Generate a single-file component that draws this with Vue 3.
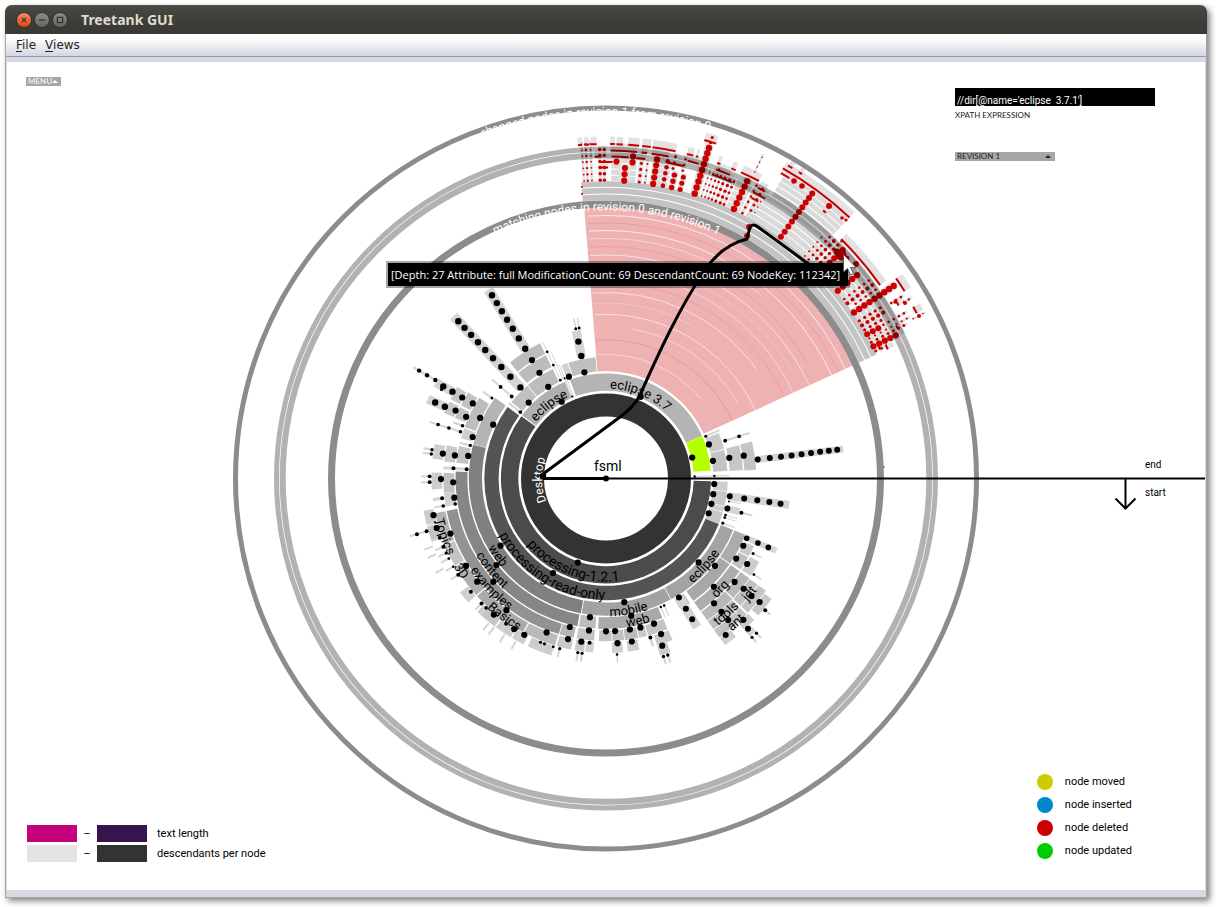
<script setup>
import { ref } from 'vue'

const CX = 606
const CY = 478.5
const UNIT = 62

const xpath = ref("//dir[@name='eclipse  3.7.1']")
const revision = ref('REVISION 1')

const level = (n) => UNIT * Math.sqrt(n)
const polar = (r, deg) => {
  const t = (deg * Math.PI) / 180
  return [(CX + r * Math.cos(t)).toFixed(2), (CY + r * Math.sin(t)).toFixed(2)]
}
const ringSector = (r0, r1, a0, a1) => {
  const large = a1 - a0 > 180 ? 1 : 0
  const [x0, y0] = polar(r0, a0)
  const [x1, y1] = polar(r1, a0)
  const [x2, y2] = polar(r1, a1)
  const [x3, y3] = polar(r0, a1)
  return `M${x0} ${y0}L${x1} ${y1}A${r1} ${r1} 0 ${large} 1 ${x2} ${y2}L${x3} ${y3}A${r0} ${r0} 0 ${large} 0 ${x0} ${y0}Z`
}
const arc = (r, a0, a1) => {
  const sweep = a1 > a0 ? 1 : 0
  const large = Math.abs(a1 - a0) > 180 ? 1 : 0
  const [x0, y0] = polar(r, a0)
  const [x1, y1] = polar(r, a1)
  return `M${x0} ${y0}A${r} ${r} 0 ${large} ${sweep} ${x1} ${y1}`
}
const gap = (n) => (n < 4 ? 2.3 : n < 7 ? 1.4 : 0.8)

// [level, start angle, end angle, fill]
const cells = [
  [2, 1.5, 216.4, '#4b4b4b'], [2, 217, 247, '#b0b0b0'], [2, 250, 336, '#b4b4b4'], [2, 336.2, 355.6, '#b4ff00'],
  [3, 22, 216, '#545454'], [3, 1.5, 6, '#cfcfcf'], [3, 6.3, 13, '#c8c8c8'], [3, 13.3, 16, '#cfcfcf'], [3, 16.2, 22, '#c8c8c8'],
  [3, 219, 229.6, '#c0c0c0'], [3, 230, 244, '#bcbcbc'], [4, 230.3, 244, '#bcbcbc'], [5, 230.4, 244, '#bcbcbc'],
  [3, 248.6, 251.6, '#d2d2d2'], [3, 252, 265, '#c0c0c0'],
  [3, 338, 346, '#cacaca'], [3, 346.4, 356.4, '#c4c4c4'], [4, 346, 356.5, '#c6c6c6'], [5, 345.8, 356.7, '#c4c4c4'],
  [4, 194.4, 216, '#b4b4b4'], [4, 100.6, 194.2, '#808080'], [4, 61.9, 100.2, '#a2a2a2'], [4, 22, 61.6, '#a3a3a3'],
  [5, 200, 212.5, '#bdbdbd'], [5, 195.5, 199.5, '#cecece'], [5, 186, 192.5, '#c4c4c4'],
  [5, 101, 182.7, '#868686'], [5, 94, 100.4, '#bdbdbd'], [5, 68, 93, '#a9a9a9'], [5, 56, 60.5, '#c8c8c8'],
  [5, 34.8, 54.5, '#a8a8a8'], [5, 22, 34.4, '#acacac'],
  [6, 206.8, 212, '#c2c2c2'], [6, 201.8, 206, '#c2c2c2'], [6, 186, 191.8, '#cacaca'], [6, 175, 182, '#c2c2c2'], [6, 170.8, 175, '#d0d0d0'],
  [6, 106.9, 168.5, '#929292'], [6, 101.5, 106.6, '#b6b6b6'], [6, 94.2, 100.4, '#c4c4c4'], [6, 88, 92.5, '#c4c4c4'],
  [6, 83.6, 87.7, '#c0c0c0'], [6, 78.6, 83.3, '#bbbbbb'], [6, 75.4, 78.3, '#c8c8c8'], [6, 67.8, 75, '#c4c4c4'],
  [6, 34.8, 54.5, '#adadad'], [6, 29, 34, '#c0c0c0'], [6, 24.6, 28.6, '#c8c8c8'],
  [7, 207, 211.6, '#c6c6c6'], [7, 202, 206.2, '#c8c8c8'], [7, 186.5, 191.4, '#cfcfcf'], [7, 176.4, 182, '#cdcdcd'],
  [7, 158, 168.5, '#b4b4b4'], [7, 150, 157.6, '#c4c4c4'], [7, 138, 149.6, '#b0b0b0'], [7, 118.4, 137.6, '#aaaaaa'],
  [7, 107, 118, '#bababa'], [7, 101.6, 106.4, '#c8c8c8'], [7, 97.2, 100.4, '#c8c8c8'], [7, 94.2, 96.8, '#d0d0d0'],
  [7, 84.4, 88, '#d0d0d0'], [7, 79, 82.8, '#cfcfcf'], [7, 67.6, 73, '#cacaca'],
  [7, 43.6, 54.5, '#b8b8b8'], [7, 34.8, 43.2, '#b8b8b8'], [7, 28.6, 34, '#cccccc'],
  [8, 165.5, 170, '#cccccc'], [8, 160, 165, '#c4c4c4'], [8, 138, 142, '#cfcfcf'], [8, 127, 134, '#c6c6c6'],
  [8, 121, 126.5, '#cccccc'], [8, 116.4, 120.5, '#cfcfcf'], [8, 107.4, 115, '#cccccc'], [8, 69.6, 73, '#cccccc'],
  [8, 44, 54.5, '#bebebe'], [8, 35, 43.4, '#c0c0c0'], [9, 44, 54.5, '#c2c2c2'], [9, 35, 43.4, '#c4c4c4'],
  [10, 50.6, 54.4, '#cccccc'], [10, 43.6, 47.6, '#cccccc'], [10, 36, 42, '#c8c8c8'],
]

// [angle, first level, last level, band width, dot radius]
const spokes = [
  [238.1, 6, 12, 10, 3.2], [226.8, 4, 12, 10, 3.2], [221, 4, 5, 2, 1.9], [217.8, 3, 3, 2, 1.9],
  [245.1, 3, 5, 1, 1.4], [246.6, 3, 4, 1, 0], [247.6, 2, 3, 1, 1.1], [248.6, 2, 2, 1, 0],
  [258.6, 4, 5, 9, 3.2], [258.6, 6, 6, 1.5, 1.5], [259.9, 6, 6, 1.5, 1.5],
  [209.5, 8, 9, 9, 3.2], [210, 10, 12, 2.5, 2.2], [204, 8, 9, 9, 3.2], [197.8, 6, 8, 2, 1.8], [200.2, 6, 6, 2, 1.8],
  [215.2, 5, 5, 2, 1.5], [193.7, 5, 5, 2, 1.6], [208.4, 9, 9, 2, 1.6], [189.4, 8, 8, 2, 1.7], [188, 8, 8, 2, 1.7],
  [183.8, 5, 6, 3, 2], [180.7, 8, 8, 2, 1.9], [178.8, 8, 8, 2, 1.9], [173.1, 7, 7, 3, 2], [170.4, 6, 7, 2, 1.8],
  [8.2, 4, 8, 8, 3], [10.6, 4, 4, 1, 1], [13.9, 4, 4, 7, 3], [14.2, 5, 5, 2, 2], [17, 4, 4, 1, 1.4], [18.2, 4, 4, 1, 1.4], [20.9, 4, 4, 1.5, 1.6],
  [-7.1, 6, 14, 7, 3], [-17.6, 4, 5, 2, 1.9], [-23, 3, 3, 2, 1.5], [-1.3, 2, 3, 1.2, 1.2],
  [58.5, 5, 7, 9, 3], [66.9, 5, 5, 1.2, 1.3], [65.4, 5, 5, 1.2, 1.3], [99.2, 8, 8, 2, 1.6], [97.8, 8, 8, 2, 1.6],
  [95.7, 7, 7, 2, 2], [86.4, 8, 8, 1.5, 1.3], [74.4, 7, 7, 2.5, 2], [72.1, 9, 9, 2, 1.7], [70.7, 9, 9, 2, 1.7],
  [23, 6, 8, 6, 2.8], [27, 7, 7, 1.5, 1.5], [33, 8, 8, 1.5, 1.4], [39.6, 11, 11, 2, 2],
  [46.6, 11, 11, 8, 3], [47.4, 12, 12, 2, 1.6], [45.8, 12, 12, 2, 1.6], [52.6, 10, 10, 8, 3],
]

const nodes = [
  [2, 108.6], [2, -13.7], [2, 240], [2, -67], [3, 119.3], [4, 147.5], [5, 141.7], [6, 137.5], [4, 205.5], [3, 224.5],
  [3, 237.8], [4, 237.8], [5, 238], [3, 250], [3, 258.5], [3, -18.3], [3, -9.4], [4, -9.5], [5, -9.4],
  [3, 2.9], [3, 8.3], [3, 13.5], [3, 18.7], [5, 205.7], [5, 197.3], [6, 209.4], [7, 209.4], [6, 203.8], [7, 204.3],
  [5, 189.3], [6, 188.7], [7, 188.7], [6, 178.6], [7, 179.8], [6, 172.8], [8, 168], [7, 160.5], [8, 163.7],
  [7, 148], [7, 141.3], [7, 127.1], [7, 111.1], [6, 103.7], [7, 103.3], [4, 81.6], [5, 79.6], [5, 96.6], [6, 96.4],
  [6, 90], [6, 86.6], [6, 81], [6, 77], [6, 71.7], [7, 98.6], [7, 86], [7, 81], [7, 70.5], [8, 71.4],
  [4, 42.2], [5, 38.7], [6, 45.1], [7, 49.1], [8, 49.1], [9, 49.2], [7, 38.8], [8, 38.7], [9, 38.9], [10, 38.8],
  [10, 45.8], [6, 26.1], [6, 31.6], [7, 31.2], [8, 129.5], [8, 121.4], [8, 117.6],
]

// [angle, level, dot radius] thin leaves round the lower left edge
const leaves = [
  [165.6, 8, 1.2], [160.4, 8, 2], [157.2, 8, 2], [155, 8, 1.6], [153, 8, 1.4], [150, 8, 1.3], [146.9, 8, 2], [140, 8, 2],
  [134.9, 8, 2], [132.8, 8, 1.8], [124.5, 8, 2], [111.8, 8, 1.6], [110.4, 8, 1.6], [107.4, 8, 1.4], [105.2, 8, 1.6],
  [163.6, 9, 2], [163.6, 10, 2], [129, 9, 0], [127, 9, 0], [119, 9, 0], [46, 9, 0], [158.6, 9, 0], [156, 9, 0], [151, 9, 0], [123, 9, 0],
]

// deleted subtrees: [angle, first level, last level, dot radius, band width]
const deleted = [
  [-94.2, 23, 29, 0.9, 3], [-93.5, 23, 29, 1.2, 3], [-92.7, 23, 29, 0.9, 3], [-91.1, 23, 28, 1.7, 4], [-90.3, 23, 28, 1.7, 4],
  [-88.1, 26, 26, 3.1, 9], [-86.5, 23, 25, 3.1, 12], [-85.2, 26, 27, 3.1, 9], [-83.6, 23, 26, 1.6, 5], [-82.5, 23, 26, 1, 3],
  [-80.9, 23, 27, 3.1, 8], [-79, 23, 27, 2.3, 6], [-77.3, 23, 25, 2.7, 7], [-75.6, 23, 25, 2.5, 6], [-77.8, 26, 28, 1.5, 4], [-76, 26, 28, 1.3, 4],
  [-72.7, 23, 31, 3.2, 9], [-72.7, 32, 33, 1.6, 6], [-71.3, 23, 27, 0.9, 2], [-70.6, 23, 27, 1, 2], [-69.9, 23, 28, 1.2, 2], [-69.2, 23, 27, 1.3, 2],
  [-68.4, 23, 27, 1.6, 3], [-67.5, 23, 27, 1.7, 3], [-66.7, 23, 27, 1.4, 3],
  [-64.6, 23, 28, 3.2, 9], [-62.8, 23, 28, 1.3, 4], [-61.6, 24, 28, 1.5, 4], [-64.1, 30, 33, 0.8, 2],
  [-54.1, 23, 32, 3, 8], [-48.2, 23, 27, 1, 2], [-47.2, 23, 28, 1.4, 3], [-46.2, 24, 28, 1.9, 3], [-45.2, 23, 29, 1.7, 3],
  [-44, 25, 28, 3, 8], [-39, 23, 27, 3.1, 8], [-41.8, 24, 27, 2, 5], [-37, 23, 28, 1.3, 3], [-36, 23, 28, 2, 4], [-35, 24, 28, 1.3, 3],
  [-33.8, 23, 31, 3.2, 8], [-31.9, 23, 27, 1.6, 3], [-30.9, 23, 27, 2.1, 4], [-29.9, 23, 26, 1.6, 3], [-28.9, 23, 25, 3, 8],
  [-29, 26, 30, 1.3, 3], [-28, 23, 30, 1.1, 3], [-27.2, 23, 29, 1.5, 3], [-26.3, 23, 27, 3.1, 7], [-25.3, 23, 24, 1.5, 3],
  [-31.6, 29, 31, 1.4, 3], [-30.6, 31, 32, 1.2, 3], [-27.5, 31, 33, 0.8, 2], [-60.8, 24, 26, 0.8, 2],
]

// wide pale blocks behind the deleted nodes: [level, start, end]
const pale = []
for (let n = 23; n <= 32; n++) pale.push([n, n < 28 ? -62 : -59.6, n < 28 ? -46 : -47])
for (let n = 23; n <= 28; n++) pale.push([n, -45, -35.4], [n, -34.6, -26])
for (let n = 23; n <= 27; n++) pale.push([n, -89, -84.4], [n, -81.6, -78.2], [n, -66.2, -63.4], [n, -73.6, -71.8])

// [radius, start, end]
const strips = [
  [334.5, -94.8, -94.1], [334.5, -93.7, -92.9], [334.5, -92.6, -91.6], [334.5, -89.3, -88.5], [334.5, -88.2, -87.1],
  [334.5, -86.2, -84.3], [334.5, -83.8, -82.3], [334.5, -82, -78], [334.5, -76, -74.9], [334.5, -74.4, -74], [334.5, -70.6, -70],
  [334.5, -68, -67.2], [334.5, -66.2, -62.8], [357, -60.3, -47], [362, -59.8, -59], [362, -57.8, -57.2], [352.5, -73.8, -71.8],
  [335.5, -45.5, -35.2], [352.5, -34.6, -32.1], [352, -29.2, -28], [340, -31.8, -30.6], [345, -51, -50.4],
  [322, -92, -90.8], [316.5, -91, -88.8], [311, -91, -89.6], [328, -89.2, -84.6], [328, -83.8, -82.8], [322, -89, -86], [322, -84.6, -83],
  [328, -82, -79], [322, -79, -76], [328, -75.6, -73.6], [328, -70.4, -67.8], [322, -70.8, -67], [328, -62.4, -61], [322, -62.8, -60.4],
  [316, -62.6, -61.2], [303, -26, -25.2], [310, -25.6, -24.6], [352, -60.2, -58.6], [328, -27.8, -27],
]
const loneDots = [
  [829, 206, 3], [794, 181, 2.8], [802, 186, 2.8], [842, 218, 1.8], [846, 220, 1.6], [895, 302, 1.8], [905, 303, 2],
  [919, 316, 2], [841, 255, 5.5], [837, 252, 3.4], [846, 259, 3.4], [856, 264, 3], [582, 187, 1], [582, 194, 1], [749, 227, 3], [747, 236, 3], [884, 467, 0.8],
]

const pinkLines = [
  [4, '#f6d5d5', -94, -40], [5, '#e89a9a', -94, -24.6], [6, '#f6d5d5', -80, -30], [7, '#f9e0e0', -94, -24.6], [8, '#f3c6c6', -94, -60],
  [9, '#f9e0e0', -94, -36], [10, '#ea9f9f', -90, -24.6], [11, '#f6d5d5', -94, -24.6], [12, '#f2c4c4', -80, -30], [13, '#f9e0e0', -94, -24.6],
  [14, '#ea9f9f', -94, -30], [15, '#f6d5d5', -94, -50], [16, '#fbeaea', -94, -24.6], [17, '#ea9f9f', -94, -24.6], [18, '#fbeaea', -94, -24.6],
]

// [text, baseline radius, start angle, direction, classes]
const labels = [
  ['changed nodes in revision 1 from revision 0', 363, 250, 1, 'light'],
  ['matching nodes in revision 0 and revision 1', 268, 245.5, 1, 'light'],
  ['Desktop', 64, 159, 1, 'light'],
  ['eclipse 3.7', 90, 272.5, 1, ''],
  ['eclipse', 90, 219, 1, ''],
  ['processing-1.2.1', 103, 140, -1, 'large'],
  ['processing-read-only', 121, 152, -1, 'large'],
  ['web', 137, 149.5, -1, ''],
  ['content', 151, 149.5, -1, ''],
  ['examples', 164, 146, -1, ''],
  ['Basics', 176, 132.6, -1, ''],
  ['Topics', 176, 166.5, -1, ''],
  ['3D', 176, 150, -1, ''],
  ['mobile', 138, 88.4, -1, ''],
  ['web', 150, 82, -1, ''],
  ['eclipse', 136, 50.5, -1, ''],
  ['org', 163, 47.4, -1, ''],
  ['tools', 185, 52.8, -1, ''],
  ['ant', 198, 50.6, -1, ''],
  ['jdt', 188, 41, -1, ''],
]

const range = (a, b) => Array.from({ length: b - a + 1 }, (_, i) => a + i)
const bandEnds = (angle, from, to) => {
  const [x1, y1] = polar(level(from), angle)
  const [x2, y2] = polar(level(to + 1) - 1, angle)
  return { x1, y1, x2, y2 }
}
const at = (n, angle) => {
  const [cx, cy] = polar(level(n) + 1, angle)
  return { cx, cy }
}

const changes = [
  { name: 'moved', text: 'node moved' },
  { name: 'inserted', text: 'node inserted' },
  { name: 'deleted', text: 'node deleted' },
  { name: 'updated', text: 'node updated' },
]
</script>

<template>
  <div class="window">
    <header class="titlebar">
      <button class="wm close" aria-label="Close">
        <svg viewBox="0 0 16 16"><path d="M5.5 5.5l5 5M10.5 5.5l-5 5" /></svg>
      </button>
      <button class="wm" aria-label="Minimize">
        <svg viewBox="0 0 16 16"><path d="M4.5 8h7" /></svg>
      </button>
      <button class="wm" aria-label="Maximize">
        <svg viewBox="0 0 16 16"><path d="M5 5h6v6h-6z" /></svg>
      </button>
      <h1>Treetank GUI</h1>
    </header>
    <nav class="menubar">
      <button><u>F</u>ile</button>
      <button><u>V</u>iews</button>
    </nav>

    <main class="canvas">
      <svg class="sunburst" viewBox="7 62 1198 828" preserveAspectRatio="xMidYMid meet">
        <defs>
          <path v-for="(l, i) in labels" :id="'arc' + i" :key="i" :d="arc(l[1], l[2], l[2] + l[3] * 100)" />
        </defs>

        <path :d="ringSector(level(3), 272, -94.6, -24.6)" fill="#efb2b2" />
        <path
          v-for="p in pinkLines" :key="'p' + p[0]" :d="arc(level(p[0]), p[2], p[3])"
          fill="none" :stroke="p[1]" stroke-width="1"
        />
        <path v-for="n in [19, 20, 21, 22]" :key="'g' + n" :d="ringSector(level(n) + 1, level(n + 1), -94.8, -24.6)" fill="#c3c3c3" />
        <path v-for="(p, i) in pale" :key="'q' + i" :d="ringSector(level(p[0]), level(p[0] + 1) - 1, p[1], p[2])" fill="#dadada" />
        <template v-for="(d, i) in deleted" :key="'d' + i">
          <line v-bind="bandEnds(d[0], d[1], d[2])" :stroke-width="d[4]" stroke="#e2e2e2" />
        </template>
        <path v-for="(s, i) in strips" :key="'sb' + i" :d="arc(s[0] + 3, s[1], s[2])" class="strip-back" />
        <g fill="#cc0000">
          <template v-for="(d, i) in deleted" :key="'e' + i">
            <circle v-for="n in range(d[1], d[2])" :key="n" v-bind="at(n, d[0])" :r="d[3]" />
          </template>
          <circle v-for="(d, i) in loneDots" :key="'l' + i" :cx="d[0]" :cy="d[1]" :r="d[2]" />
        </g>
        <path v-for="(s, i) in strips" :key="'s' + i" :d="arc(s[0], s[1], s[2])" class="strip" />

        <circle :cx="CX" :cy="CY" r="370.5" class="ring" stroke-width="5" />
        <circle :cx="CX" :cy="CY" r="329.5" class="ring soft" stroke-width="5" />
        <circle :cx="CX" :cy="CY" r="323.3" class="ring soft" stroke-width="6" />
        <circle :cx="CX" :cy="CY" r="274.5" class="ring" stroke-width="7" />

        <circle :cx="CX" :cy="CY" r="73.5" fill="none" stroke="#333333" stroke-width="23" />
        <path v-for="(c, i) in cells" :key="'c' + i" :d="ringSector(level(c[0]), level(c[0] + 1) - gap(c[0]), c[1], c[2])" :fill="c[3]" />
        <template v-for="(s, i) in spokes" :key="'k' + i">
          <line v-bind="bandEnds(s[0], s[1], s[2])" :stroke-width="s[3]" stroke="#d4d4d4" />
        </template>
        <template v-for="(s, i) in leaves" :key="'f' + i">
          <line v-bind="bandEnds(s[0], s[1], s[1])" stroke-width="2" stroke="#d4d4d4" />
          <circle v-bind="at(s[1], s[0])" :r="s[2]" />
        </template>
        <template v-for="(s, i) in spokes" :key="'m' + i">
          <circle v-for="n in range(s[1], s[2])" :key="n" v-bind="at(n, s[0])" :r="s[4]" />
        </template>
        <circle v-for="(n, i) in nodes" :key="'n' + i" v-bind="at(n[0], n[1])" r="3.1" />

        <text v-for="(l, i) in labels" :key="'t' + i" class="arc-label" :class="l[4]">
          <textPath :href="'#arc' + i">{{ l[0] }}</textPath>
        </text>

        <path d="M606 478.5H543" stroke="#000" stroke-width="3" />
        <path d="M606 478.5H1205" stroke="#000" stroke-width="2" />
        <circle cx="606" cy="478.5" r="3" />
        <circle cx="543" cy="476" r="3.2" />
        <path class="trail" d="M543 474L620 417Q634 407 640 395C660 350 680 307 705 270Q722 245 747 239L750 227Q753 223 758 227L836 284" />
        <text x="594" y="471" class="root-label">fsml</text>
        <path d="M1125.500 478V508M1115.500 498.500L1125.500 508.500L1135.500 498.500" fill="none" stroke="#000" stroke-width="2" />
        <text x="1145" y="468" class="small-label">end</text>
        <text x="1145" y="496" class="small-label">start</text>

        <rect x="386" y="261" width="464" height="27" fill="#000" opacity=".35" />
        <rect x="388" y="263" width="460" height="23" />
        <text x="391" y="279" class="tip">[Depth: 27 Attribute: full ModificationCount: 69 DescendantCount: 69 NodeKey: 112342]</text>
        <path d="M843.500 254.500v17.500l4-3.500 3 6.500 3-1.500-3-6h5.500z" fill="#fff" stroke="#444" stroke-width=".8" />
      </svg>

      <div class="controls">
        <button class="menu">MENU
          <svg viewBox="0 0 6 3"><path d="M0 3L3 0L6 3Z" /></svg>
        </button>
        <div class="query">
          <input id="xpath" v-model="xpath" type="text" spellcheck="false">
          <label for="xpath">XPATH EXPRESSION</label>
          <div class="revision">
            <select v-model="revision" aria-label="Revision">
              <option>REVISION 1</option>
            </select>
            <svg viewBox="0 0 6 3"><path d="M0 3L3 0L6 3Z" /></svg>
          </div>
        </div>
      </div>

      <div class="legends">
        <div class="scales">
          <i class="swatch magenta"></i><span class="dash">–</span><i class="swatch purple"></i><span>text length</span>
          <i class="swatch silver"></i><span class="dash">–</span><i class="swatch coal"></i><span>descendants per node</span>
        </div>
        <ul class="changes">
          <li v-for="c in changes" :key="c.name"><i class="dot" :class="c.name"></i>{{ c.text }}</li>
        </ul>
      </div>
    </main>
  </div>
</template>

<style>
body {
  background: #fff;
}
</style>

<style scoped>
.window {
  box-sizing: border-box;
  display: flex;
  flex-direction: column;
  height: calc(100vh - 14px);
  margin: 5px 9px 9px 5px;
  border: 1px solid #a6a6a6;
  border-top: 0;
  border-radius: 7px 7px 0 0;
  box-shadow: 3px 3px 6px rgba(0, 0, 0, 0.5);
  background: #d6d9e0;
  font-family: Roboto, "Liberation Sans", sans-serif;
}
.titlebar {
  display: flex;
  align-items: center;
  gap: 2px;
  height: 29px;
  padding-left: 11px;
  margin: 0 -1px;
  border-radius: 7px 7px 0 0;
  background: linear-gradient(#56544e 0, #474640 8%, #3c3b37 70%, #3a3935);
}
.titlebar h1 {
  margin: 0 0 0 11px;
  font: bold 14px "Noto Sans", sans-serif;
  color: #dfdbd2;
}
.wm {
  width: 16px;
  height: 16px;
  padding: 0;
  border: 1px solid #33322e;
  border-radius: 50%;
  background: linear-gradient(#8d8c85, #66655f);
}
.wm svg {
  display: block;
  width: 14px;
  height: 14px;
  fill: none;
  stroke: #33322e;
  stroke-width: 1.4;
}
.wm.close {
  background: linear-gradient(#f58a62, #dd4814);
}
.menubar {
  display: flex;
  gap: 9px;
  height: 22px;
  padding-left: 10px;
  border-bottom: 1px solid #9499ab;
  background: linear-gradient(#fff 20%, #d3d6e0);
}
.menubar button {
  padding: 0;
  border: 0;
  background: none;
  font: 12px "DejaVu Sans", sans-serif;
  color: #222;
}
.menubar u {
  text-underline-offset: 2px;
}
.canvas {
  flex: 1;
  min-height: 0;
  display: grid;
  grid-template: minmax(0, 1fr) / minmax(0, 1fr);
  margin: 5px 1px 7px;
  background: #fff;
}
.canvas > * {
  grid-area: 1 / 1;
}
.sunburst {
  width: 100%;
  height: 100%;
}
.ring {
  fill: none;
  stroke: #8c8c8c;
}
.ring.soft {
  stroke: rgba(0, 0, 0, 0.3);
}
.strip,
.strip-back {
  fill: none;
  stroke: #cc0000;
  stroke-width: 2;
}
.strip-back {
  stroke: #e2e2e2;
  stroke-width: 9;
}
.trail {
  fill: none;
  stroke: #000;
  stroke-width: 3;
  stroke-linejoin: round;
}
.arc-label {
  font-size: 13px;
}
.arc-label.large {
  font-size: 14px;
}
.arc-label.light {
  font-size: 12px;
  fill: #fff;
}
.root-label {
  font-size: 14px;
}
.small-label {
  font-size: 10px;
}
.tip {
  font-family: "Open Sans", "Liberation Sans", sans-serif;
  font-size: 11px;
  fill: #fff;
}
.controls {
  align-self: start;
  display: flex;
  justify-content: space-between;
  align-items: flex-start;
  padding: 15px 50px 0 19px;
}
.controls button,
.controls input,
.controls select {
  box-sizing: border-box;
  margin: 0;
  border: 0;
  border-radius: 0;
  font: 8px/9px Lato, "Liberation Sans", sans-serif;
}
.controls svg {
  flex: none;
  width: 6px;
  height: 3px;
}
.controls .menu {
  display: flex;
  align-items: center;
  justify-content: space-between;
  width: 35px;
  height: 9px;
  padding: 0 4px 0 2px;
  background: #a6a6a6;
  color: #fff;
}
.menu svg {
  fill: #fff;
}
.query {
  display: flex;
  flex-direction: column;
  width: 200px;
  padding-top: 11px;
}
.controls .query input {
  height: 18px;
  padding: 6px 2px 0;
  background: #000;
  color: #fff;
  font: 10px/12px Roboto, "Liberation Sans", sans-serif;
}
.query label {
  margin-top: 3px;
  font: 8px/12px Lato, "Liberation Sans", sans-serif;
  color: #222;
}
.revision {
  display: flex;
  align-items: center;
  width: 100px;
  height: 9px;
  margin-top: 31px;
  padding-right: 4px;
  box-sizing: border-box;
  background: #a6a6a6;
}
.revision select {
  flex: 1;
  height: 9px;
  padding: 0 2px;
  appearance: none;
  background: none;
  color: #222;
}
.revision svg {
  fill: #222;
}
.legends {
  align-self: end;
  display: flex;
  justify-content: space-between;
  align-items: flex-end;
  padding: 0 73px 28px 20px;
  font-size: 11px;
  color: #000;
}
.scales {
  display: grid;
  grid-template-columns: 50px 20px 50px auto;
  row-gap: 3px;
  line-height: 17px;
}
.scales span {
  padding-left: 10px;
}
.scales .dash {
  padding: 0;
  text-align: center;
}
.magenta {
  background: #c4007a;
}
.purple {
  background: #38154f;
}
.silver {
  background: #e4e4e4;
}
.coal {
  background: #333;
}
.changes {
  margin: 0;
  padding: 0;
  list-style: none;
}
.changes li {
  display: flex;
  align-items: center;
  gap: 12px;
  height: 23px;
}
.dot {
  width: 16px;
  height: 16px;
  border-radius: 50%;
}
.moved {
  background: #cccc00;
}
.inserted {
  background: #0088cc;
}
.deleted {
  background: #cc0000;
}
.updated {
  background: #00cc00;
}
</style>
